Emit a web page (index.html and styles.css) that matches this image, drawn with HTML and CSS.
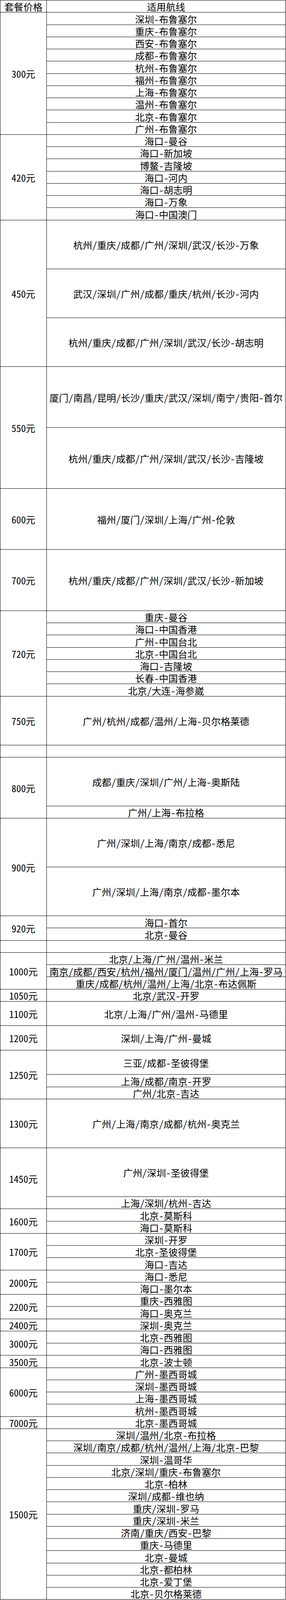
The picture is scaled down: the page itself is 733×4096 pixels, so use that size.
FILE: index.html
```html
<!DOCTYPE html>
<html lang="zh-CN">
<head>
<meta charset="utf-8">
<title>套餐价格</title>
<link rel="stylesheet" href="styles.css">
</head>
<body>
<div class="table">
  <div class="group">
    <div class="price">套餐价格</div>
    <div class="routes"><div class="route h1">适用航线</div></div>
  </div>
  <div class="group">
    <div class="price">300元</div>
    <div class="routes">
      <div class="route h1">深圳-布鲁塞尔</div>
      <div class="route h1">重庆-布鲁塞尔</div>
      <div class="route h1">西安-布鲁塞尔</div>
      <div class="route h1">成都-布鲁塞尔</div>
      <div class="route h1">杭州-布鲁塞尔</div>
      <div class="route h1">福州-布鲁塞尔</div>
      <div class="route h1">上海-布鲁塞尔</div>
      <div class="route h1">温州-布鲁塞尔</div>
      <div class="route h1">北京-布鲁塞尔</div>
      <div class="route h1">广州-布鲁塞尔</div>
    </div>
  </div>
  <div class="group">
    <div class="price">420元</div>
    <div class="routes">
      <div class="route h1">海口-曼谷</div>
      <div class="route h1">海口-新加坡</div>
      <div class="route h1">博鳌-吉隆坡</div>
      <div class="route h1">海口-河内</div>
      <div class="route h1">海口-胡志明</div>
      <div class="route h1">海口-万象</div>
      <div class="route h1">海口-中国澳门</div>
    </div>
  </div>
  <div class="group">
    <div class="price">450元</div>
    <div class="routes">
      <div class="route h4">杭州/重庆/成都/广州/深圳/武汉/长沙-万象</div>
      <div class="route h4">武汉/深圳/广州/成都/重庆/杭州/长沙-河内</div>
      <div class="route h4">杭州/重庆/成都/广州/深圳/武汉/长沙-胡志明</div>
    </div>
  </div>
  <div class="group">
    <div class="price">550元</div>
    <div class="routes">
      <div class="route h5">厦门/南昌/昆明/长沙/重庆/武汉/深圳/南宁/贵阳-首尔</div>
      <div class="route h5">杭州/重庆/成都/广州/深圳/武汉/长沙-吉隆坡</div>
    </div>
  </div>
  <div class="group">
    <div class="price">600元</div>
    <div class="routes">
      <div class="route h5">福州/厦门/深圳/上海/广州-伦敦</div>
    </div>
  </div>
  <div class="group">
    <div class="price">700元</div>
    <div class="routes">
      <div class="route h5">杭州/重庆/成都/广州/深圳/武汉/长沙-新加坡</div>
    </div>
  </div>
  <div class="group">
    <div class="price">720元</div>
    <div class="routes">
      <div class="route h1">重庆-曼谷</div>
      <div class="route h1">海口-中国香港</div>
      <div class="route h1">广州-中国台北</div>
      <div class="route h1">北京-中国台北</div>
      <div class="route h1">海口-吉隆坡</div>
      <div class="route h1">长春-中国香港</div>
      <div class="route h1">北京/大连-海参崴</div>
    </div>
  </div>
  <div class="group">
    <div class="price">750元</div>
    <div class="routes">
      <div class="route h4">广州/杭州/成都/温州/上海-贝尔格莱德</div>
    </div>
  </div>
  <div class="group">
    <div class="price"></div>
    <div class="routes"><div class="route h1"></div></div>
  </div>
  <div class="group">
    <div class="price">800元</div>
    <div class="routes">
      <div class="route h4">成都/重庆/深圳/广州/上海-奥斯陆</div>
      <div class="route h1">广州/上海-布拉格</div>
    </div>
  </div>
  <div class="group">
    <div class="price">900元</div>
    <div class="routes">
      <div class="route h4">广州/深圳/上海/南京/成都-悉尼</div>
      <div class="route h4">广州/深圳/上海/南京/成都-墨尔本</div>
    </div>
  </div>
  <div class="group">
    <div class="price">920元</div>
    <div class="routes">
      <div class="route h1">海口-首尔</div>
      <div class="route h1">北京-曼谷</div>
    </div>
  </div>
  <div class="group">
    <div class="price"></div>
    <div class="routes"><div class="route h1"></div></div>
  </div>
  <div class="group">
    <div class="price">1000元</div>
    <div class="routes">
      <div class="route h1">北京/上海/广州/温州-米兰</div>
      <div class="route h1">南京/成都/西安/杭州/福州/厦门/温州/广州/上海-罗马</div>
      <div class="route h1">重庆/成都/杭州/温州/上海/北京-布达佩斯</div>
    </div>
  </div>
  <div class="group">
    <div class="price">1050元</div>
    <div class="routes"><div class="route h1">北京/武汉-开罗</div></div>
  </div>
  <div class="group">
    <div class="price">1100元</div>
    <div class="routes"><div class="route h2">北京/上海/广州/温州-马德里</div></div>
  </div>
  <div class="group">
    <div class="price">1200元</div>
    <div class="routes"><div class="route h2">深圳/上海/广州-曼城</div></div>
  </div>
  <div class="group">
    <div class="price">1250元</div>
    <div class="routes">
      <div class="route h2">三亚/成都-圣彼得堡</div>
      <div class="route h1">上海/成都/南京-开罗</div>
      <div class="route h1">广州/北京-吉达</div>
    </div>
  </div>
  <div class="group">
    <div class="price">1300元</div>
    <div class="routes"><div class="route h4">广州/上海/南京/成都/杭州-奥克兰</div></div>
  </div>
  <div class="group">
    <div class="price">1450元</div>
    <div class="routes">
      <div class="route h4">广州/深圳-圣彼得堡</div>
      <div class="route h1">上海/深圳/杭州-吉达</div>
    </div>
  </div>
  <div class="group">
    <div class="price">1600元</div>
    <div class="routes">
      <div class="route h1">北京-莫斯科</div>
      <div class="route h1">海口-莫斯科</div>
    </div>
  </div>
  <div class="group">
    <div class="price">1700元</div>
    <div class="routes">
      <div class="route h1">深圳-开罗</div>
      <div class="route h1">北京-圣彼得堡</div>
      <div class="route h1">海口-吉达</div>
    </div>
  </div>
  <div class="group">
    <div class="price">2000元</div>
    <div class="routes">
      <div class="route h1">海口-悉尼</div>
      <div class="route h1">海口-墨尔本</div>
    </div>
  </div>
  <div class="group">
    <div class="price">2200元</div>
    <div class="routes">
      <div class="route h1">重庆-西雅图</div>
      <div class="route h1">海口-奥克兰</div>
    </div>
  </div>
  <div class="group">
    <div class="price">2400元</div>
    <div class="routes"><div class="route h1">深圳-奥克兰</div></div>
  </div>
  <div class="group">
    <div class="price">3000元</div>
    <div class="routes">
      <div class="route h1">北京-西雅图</div>
      <div class="route h1">海口-西雅图</div>
    </div>
  </div>
  <div class="group">
    <div class="price">3500元</div>
    <div class="routes"><div class="route h1">北京-波士顿</div></div>
  </div>
  <div class="group">
    <div class="price">6000元</div>
    <div class="routes">
      <div class="route h1">广州-墨西哥城</div>
      <div class="route h1">深圳-墨西哥城</div>
      <div class="route h1">上海-墨西哥城</div>
      <div class="route h1">杭州-墨西哥城</div>
    </div>
  </div>
  <div class="group">
    <div class="price">7000元</div>
    <div class="routes"><div class="route h1">北京-墨西哥城</div></div>
  </div>
  <div class="group">
    <div class="price">1500元</div>
    <div class="routes">
      <div class="route h1">深圳/温州/北京-布拉格</div>
      <div class="route h1">深圳/南京/成都/杭州/温州/上海/北京-巴黎</div>
      <div class="route h1">深圳-温哥华</div>
      <div class="route h1">北京/深圳/重庆-布鲁塞尔</div>
      <div class="route h1">北京-柏林</div>
      <div class="route h1">深圳/成都-维也纳</div>
      <div class="route h1">重庆/深圳-罗马</div>
      <div class="route h1">重庆/深圳-米兰</div>
      <div class="route h1">济南/重庆/西安-巴黎</div>
      <div class="route h1">重庆-马德里</div>
      <div class="route h1">北京-曼城</div>
      <div class="route h1">北京-都柏林</div>
      <div class="route h1">北京-爱丁堡</div>
      <div class="route h1">北京-贝尔格莱德</div>
    </div>
  </div>
</div>
</body>
</html>
```

FILE: styles.css
```css
html, body {
  margin: 0;
  padding: 0;
  background: #ffffff;
}

body {
  font-family: "Noto Sans CJK SC", "Noto Sans", sans-serif;
  font-size: 24.4px;
  font-feature-settings: "hwid" 1;
  color: #000000;
  line-height: 1;
}

.table {
  width: 732px;
  box-sizing: border-box;
  border-top: 1px solid #000;
  border-left: 1px solid #000;
}

.group {
  display: flex;
}

.price {
  width: 119px;
  flex: none;
  box-sizing: border-box;
  border-right: 1px solid #000;
  border-bottom: 1px solid #000;
  display: flex;
  align-items: center;
  justify-content: center;
  padding-top: 3px;
  white-space: nowrap;
}

.routes {
  flex: 1;
  display: flex;
  flex-direction: column;
}

.route {
  box-sizing: border-box;
  border-right: 1px solid #000;
  border-bottom: 1px solid #000;
  display: flex;
  align-items: center;
  justify-content: center;
  padding-top: 3px;
  white-space: nowrap;
}

.h1 { height: 31.26px; }
.h2 { height: 62.52px; }
.h4 { height: 125.04px; }
.h5 { height: 156.3px; }
```
